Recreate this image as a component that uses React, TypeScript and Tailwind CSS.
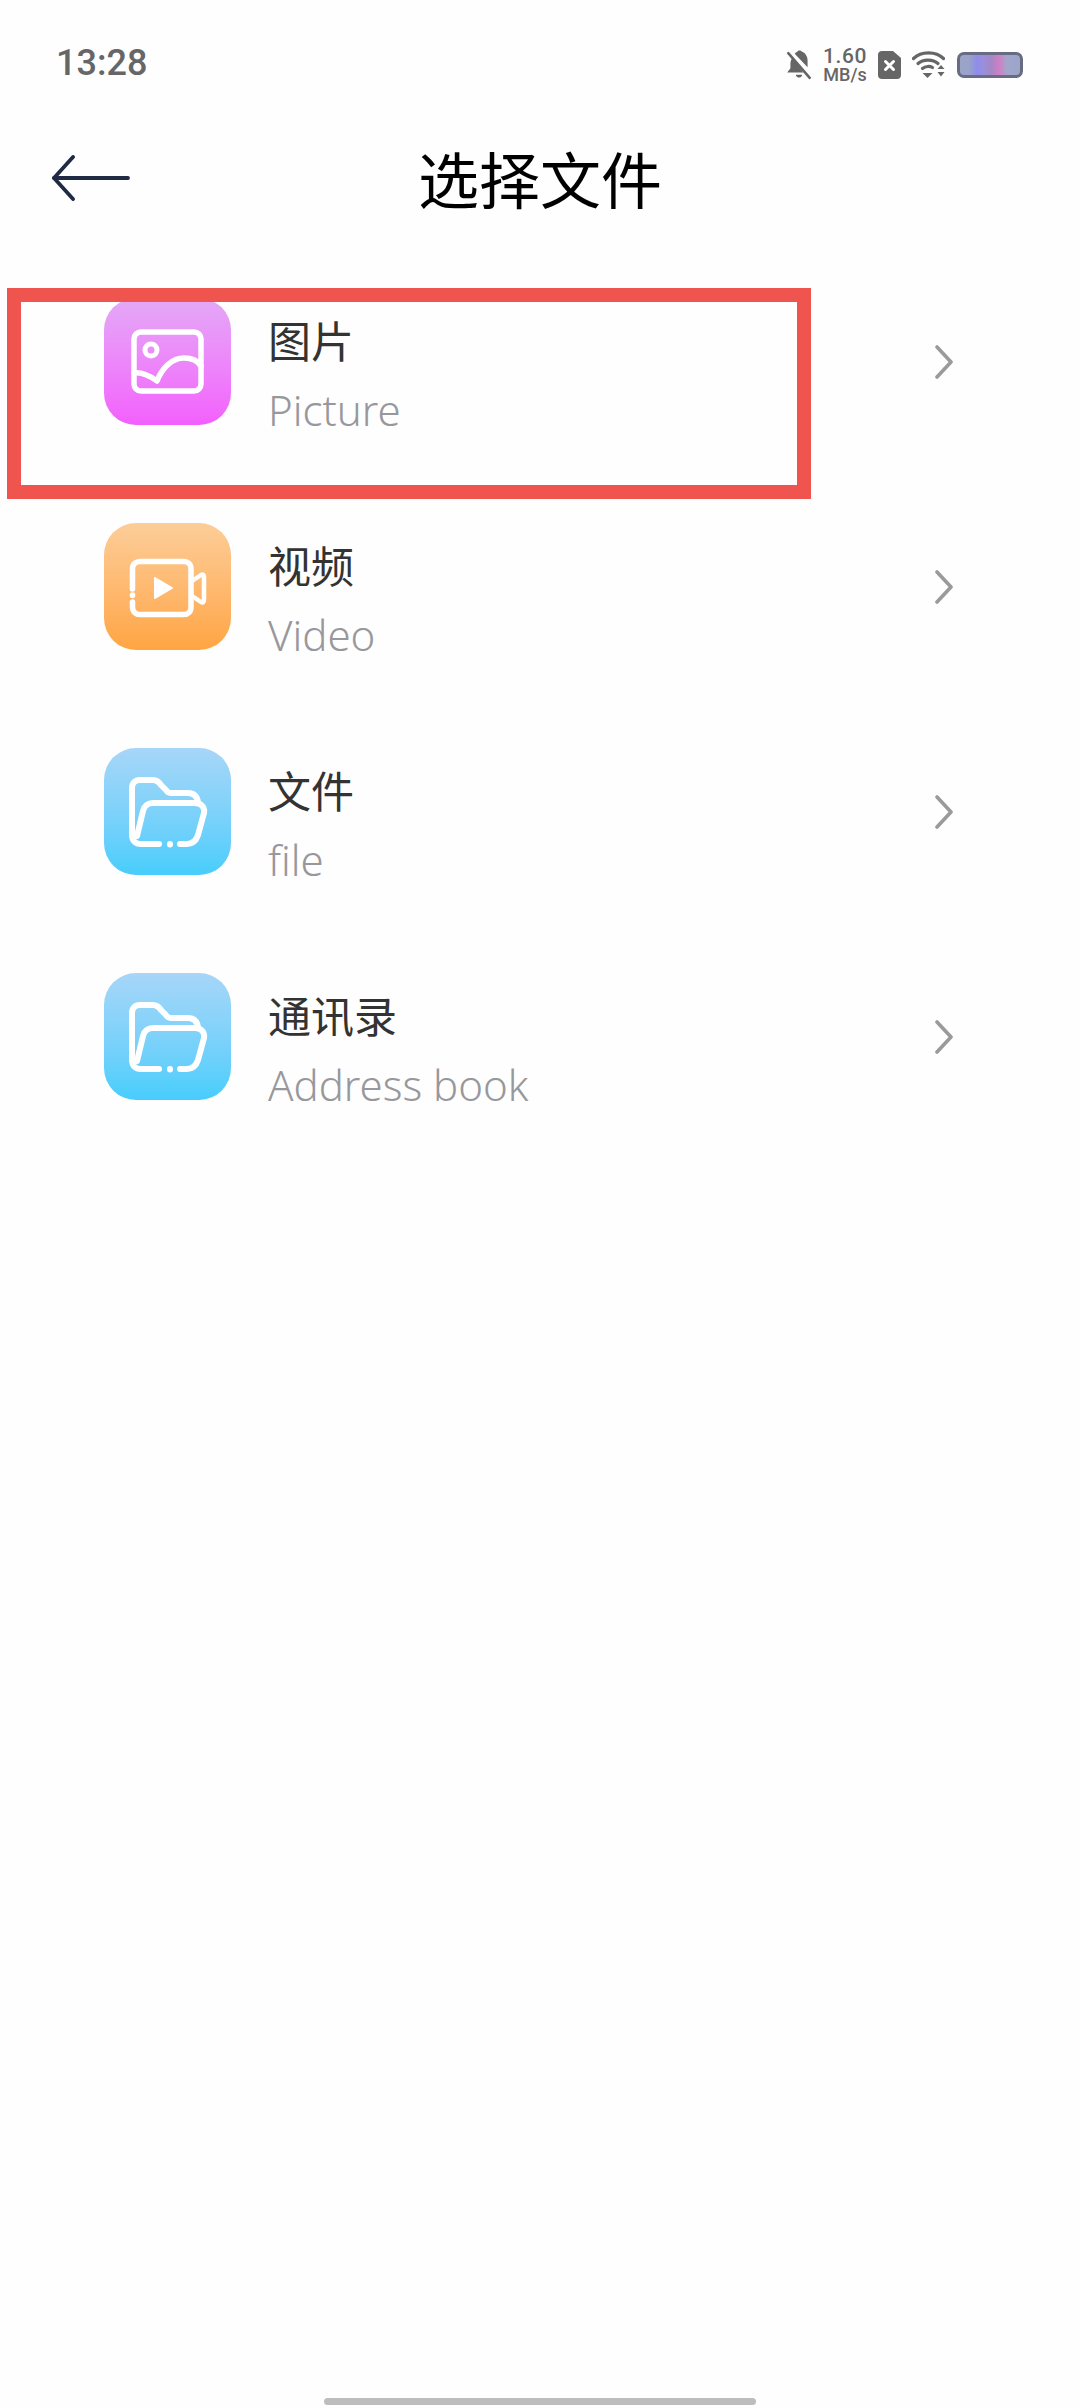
const rows = [
    { title: "图片", sub: "Picture", kind: "picture" },
    { title: "视频", sub: "Video", kind: "video" },
    { title: "文件", sub: "file", kind: "folder" },
    { title: "通讯录", sub: "Address book", kind: "folder" },
]

const PictureIcon = () => (
    <div className="w-[127px] h-[127px] shrink-0 rounded-[32px] bg-gradient-to-b from-[#e3a8f6] to-[#f35ffd]">
        <svg viewBox="0 0 127 127" className="w-full h-full" fill="none" stroke="#fff" strokeWidth="5.5" strokeLinecap="round" strokeLinejoin="round">
            <rect x="30" y="34" width="67" height="59" rx="7" />
            <circle cx="47" cy="52" r="6" strokeWidth="5" />
            <path d="M30 75 C38 74 46 78 53 83 C58 70 68 60 80 60 C88 60 94 63 97 68" />
        </svg>
    </div>
)

const VideoIcon = () => (
    <div className="w-[127px] h-[127px] shrink-0 rounded-[32px] bg-gradient-to-b from-[#fccd98] to-[#ffa541]">
        <svg viewBox="0 0 127 127" className="w-full h-full" fill="none" stroke="#fff" strokeWidth="5.5" strokeLinecap="round" strokeLinejoin="round">
            <path d="M28.5 66 V46 C28.5 41 32 38.5 36 38.5 H80 C84 38.5 87 41 87 46 V84 C87 89 84 91.5 80 91.5 H36 C32 91.5 28.5 89 28.5 84 V79" />
            <path d="M28.5 72 V72.5" />
            <path d="M88 58 L97 52 C99 51 100 52 100 54 V77 C100 79 99 80 97 79 L88 73" strokeWidth="4.5" />
            <path d="M51 55 L68 65 L51 75 Z" fill="#fff" strokeWidth="2" />
        </svg>
    </div>
)

const FolderIcon = () => (
    <div className="w-[127px] h-[127px] shrink-0 rounded-[32px] bg-gradient-to-b from-[#a6d6f8] to-[#46cdfc]">
        <svg viewBox="0 0 127 127" className="w-full h-full" fill="none" stroke="#fff" strokeWidth="6" strokeLinecap="round" strokeLinejoin="round">
            <path d="M55 96 H37 C31 96 28 92 28 87 V40 C28 35 31 32 36 32 H49 C53 32 55 34 57 37 L62 42 C63 44 65 45 67 45 H84 C90 45 93 48 94 54" />
            <path d="M33 88 L39 63 C40 58 44 55 49 55 H91 C97 55 101 59 100 65 L94 87 C92 93 88 96 83 96 H76" />
            <path d="M66 96 V96.5" />
        </svg>
    </div>
)

const StatusIcons = () => (
    <div className="flex items-center">
        <svg viewBox="0 0 26 28" className="w-[28px] h-[30px]" fill="#666">
            <path d="M3 3 L23 26" stroke="#666" strokeWidth="2.4" strokeLinecap="round" />
            <path d="M7 7 C5.5 9 5 11 5 13 V17 L2 21 H17 Z" />
            <path d="M9 3.5 C10 2.5 11 2 11.500 1.500 C12 0 15 0 15.500 1.500 C18.500 2.500 21 5.500 21 10 V16 Z" />
            <path d="M10 23 H16 C15.500 26.500 10.500 26.500 10 23 Z" />
        </svg>
        <div className="ml-[10px] w-[44px] flex flex-col items-center text-[#666] font-['Roboto',sans-serif] font-medium">
            <span className="text-[21px] leading-[20px] tracking-[0.6px]">1.60</span>
            <span className="text-[18px] leading-[17px]">MB/s</span>
        </div>
        <svg viewBox="0 0 23 28" className="ml-[11px] w-[23px] h-[28px]">
            <path d="M4 0 H15 L23 7 V24 C23 26.500 21.500 28 19 28 H4 C1.500 28 0 26.500 0 24 V4 C0 1.500 1.500 0 4 0 Z" fill="#666" />
            <path d="M7.500 10.500 L15.500 18.500 M15.500 10.500 L7.500 18.500" stroke="#fff" strokeWidth="3" strokeLinecap="round" />
        </svg>
        <svg viewBox="0 0 33 27" className="ml-[11px] w-[33px] h-[27px]" fill="none" stroke="#666" strokeLinecap="round">
            <path d="M1.500 7.500 C9 0 24 0 31.500 7.500" strokeWidth="3.200" />
            <path d="M6 12.500 C11 8 21 8 26 12.500" strokeWidth="3.200" />
            <path d="M10.500 17.500 C13.500 15 18 15 20.500 16.500" strokeWidth="3.200" />
            <path d="M10.500 22 L20.500 22 L15.500 27 Z" fill="#666" stroke="none" />
            <path d="M25.500 18 L29 14 L32.500 18 Z M25.500 21 L32.500 21 L29 25.500 Z" fill="#666" stroke="none" />
        </svg>
        <div className="ml-[12px] w-[66px] h-[26px] rounded-[7px] border-[3px] border-[#686c82] bg-[linear-gradient(90deg,#9aa3c8_0%,#9aa3c8_15%,#8f8cec_28%,#9a8fd8_40%,#a487c6_52%,#cf7fc4_65%,#a3a6cc_78%,#9aa6c9_100%)]" />
    </div>
)

const Row = ({ title, sub, kind }: { title: string, sub: string, kind: string }) => {
    return (
        <div className="h-[225px] pl-[104px] pr-[126px] flex items-center">
            {kind === "picture" && <PictureIcon />}
            {kind === "video" && <VideoIcon />}
            {kind === "folder" && <FolderIcon />}
            <div className="ml-[37px] self-start pt-[55px] flex-1">
                <div className="text-[43px] leading-[70px] text-[#333] font-['Noto_Sans_CJK_SC',sans-serif]">{title}</div>
                <div className="text-[42px] leading-[71px] text-[#98989c] font-['Noto_Sans',sans-serif] font-light">{sub}</div>
            </div>
            <svg viewBox="0 0 20 34" className="w-[20px] h-[34px]" fill="none" stroke="#9a9a9a" strokeWidth="3.600" strokeLinecap="round" strokeLinejoin="round">
                <path d="M3 2 L17 17 L3 32" />
            </svg>
        </div>
    )
}

export default function App() {
    return (
        <div className="relative w-[1080px] h-[2408px] overflow-hidden bg-[#fefefe]">
            <div className="h-[126px] pl-[56px] pr-[57px] pt-[44px] flex items-start justify-between">
                <span className="text-[36px] leading-[38px] text-[#666] font-['Roboto',sans-serif] font-medium">13:28</span>
                <div className="pt-[2px]"><StatusIcons /></div>
            </div>
            <div className="relative h-[123px] pt-[12px] flex justify-center">
                <svg viewBox="0 0 78 46" className="absolute left-[52px] top-[29px] w-[78px] h-[46px]" fill="none" stroke="#1f2a44" strokeWidth="3.800" strokeLinecap="round" strokeLinejoin="round">
                    <path d="M2 23 H76" />
                    <path d="M21 2 L2 23 L21 44" />
                </svg>
                <h1 className="text-[61px] leading-[80px] text-black font-normal font-['Noto_Sans_CJK_SC',sans-serif]">选择文件</h1>
            </div>
            <div className="flex flex-col">
                {rows.map(r => <Row key={r.sub} title={r.title} sub={r.sub} kind={r.kind} />)}
            </div>
            {/* red highlight box drawn over the first row */}
            <div className="absolute left-[7px] top-[288px] w-[804px] h-[211px] border-[14px] border-[#ef554e]" />
            <div className="absolute left-[324px] bottom-[3px] w-[432px] h-[7px] rounded-full bg-[#bdbdbd]" />
        </div>
    )
}
